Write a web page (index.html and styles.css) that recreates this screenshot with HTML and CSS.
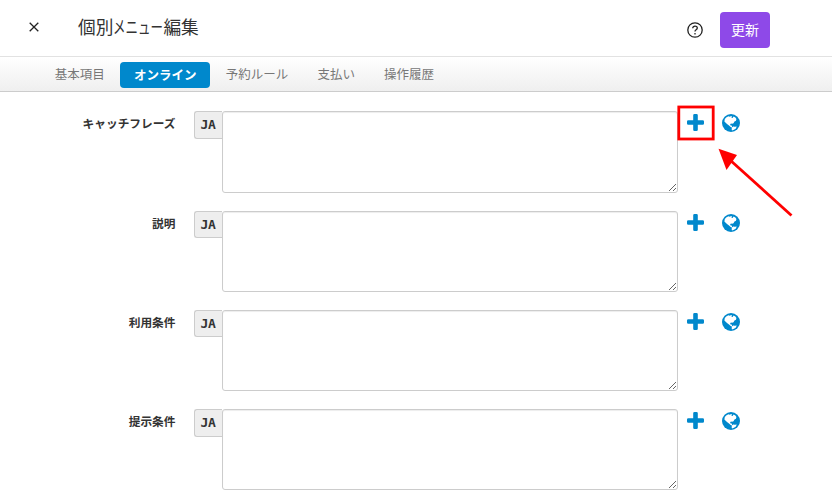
FILE: index.html
```html
<!DOCTYPE html>
<html lang="ja">
<head>
    <meta charset="UTF-8">
    <meta name="viewport" content="width=device-width, initial-scale=1.0">
    <title>個別メニュー編集</title>
    <link rel="stylesheet" href="styles.css">
</head>
<body>
    <svg class="symbols">
        <symbol id="plus" viewBox="0 0 17 17">
            <path d="M7.500 0h2q1.300 0 1.300 1.300v4.900h4.900q1.300 0 1.300 1.300v2q0 1.300-1.300 1.300h-4.900v4.900q0 1.300-1.300 1.300h-2q-1.300 0-1.300-1.300v-4.900H1.300Q0 10.800 0 9.500v-2q0-1.300 1.300-1.300h4.900V1.300Q6.200 0 7.500 0z"/>
        </symbol>
        <symbol id="globe" viewBox="0 0 18 18">
            <circle cx="9" cy="9" r="9"/>
            <path class="land" d="M2.800 5L4.500 3.300 6.500 2.200l1.200.5 1.600-.7.700.8-.7.900 1.300.3 1-1.500 1.800.9 1 1.600-.4 1.700-1.500.9-1 1.600-1.400.6-1.200-.3-.8.900.5 1.100 1.100.1.500 1.300 1 .7-.5.500-2-1-1.700-1.700-2-1.500L2.400 7.500z"/>
            <path class="land" d="M10 13.700l1.200-1.200 1.700.3 1.800-.2-.8 1.800-1.900 1.400-2 .6-.4-1.300z"/>
        </symbol>
    </svg>

    <header class="header">
        <button class="close">
            <svg width="10" height="10" viewBox="0 0 10 10"><path d="M.7.7l8.600 8.600M9.300.7L.7 9.300"/></svg>
        </button>
        <h1 class="title">個別<span class="narrow">メニュー</span>編集</h1>
        <button class="help">
            <svg width="16" height="16" viewBox="0 0 16 16">
                <circle cx="8" cy="8" r="7.200"/>
                <path d="M5.700 6.300C5.700 4.900 6.700 4.100 8 4.100s2.300.8 2.300 2c0 1.700-2.300 1.700-2.300 3.400"/>
                <path d="M8 10.900v1.500"/>
            </svg>
        </button>
        <button class="update">更新</button>
    </header>

    <nav class="tabs">
        <a class="tab">基本項目</a>
        <a class="tab active">オンライン</a>
        <a class="tab">予約ルール</a>
        <a class="tab">支払い</a>
        <a class="tab">操作履歴</a>
    </nav>

    <main class="form">
        <div class="row">
            <label class="label">キャッチフレーズ</label>
            <span class="lang">JA</span>
            <textarea class="input"></textarea>
            <svg class="plus"><use href="#plus"/></svg>
            <svg class="globe"><use href="#globe"/></svg>
        </div>
        <div class="row">
            <label class="label">説明</label>
            <span class="lang">JA</span>
            <textarea class="input"></textarea>
            <svg class="plus"><use href="#plus"/></svg>
            <svg class="globe"><use href="#globe"/></svg>
        </div>
        <div class="row">
            <label class="label">利用条件</label>
            <span class="lang">JA</span>
            <textarea class="input"></textarea>
            <svg class="plus"><use href="#plus"/></svg>
            <svg class="globe"><use href="#globe"/></svg>
        </div>
        <div class="row">
            <label class="label">提示条件</label>
            <span class="lang">JA</span>
            <textarea class="input"></textarea>
            <svg class="plus"><use href="#plus"/></svg>
            <svg class="globe"><use href="#globe"/></svg>
        </div>
    </main>

    <!-- callout around the first add button -->
    <svg class="callout" width="130" height="125" viewBox="0 0 130 125">
        <rect x="8.800" y="8" width="34.400" height="32"/>
        <path d="M60 61L121.500 116.500"/>
        <path class="head" d="M48.500 49.700L67 56 56.500 71z"/>
    </svg>
</body>
</html>
```

FILE: styles.css
```css
body {
    margin: 0;
    height: 504px;
    overflow: hidden;
    font-family: "Noto Sans CJK JP", sans-serif;
    background-color: #fff;
    color: #333;
}

button {
    padding: 0;
    border: none;
    background: none;
    font-family: inherit;
    cursor: pointer;
}

.symbols {
    position: absolute;
    width: 0;
    height: 0;
}

.header {
    display: flex;
    box-sizing: border-box;
    height: 56px;
    padding: 12px 62px 0 29px;
}

.close {
    width: 10px;
    height: 30px;
}

.close svg,
.help svg {
    display: block;
    fill: none;
    stroke: #222;
    stroke-width: 1.3;
}

.title {
    flex: 1;
    margin: 0 0 0 39px;
    font-size: 17.7px;
    font-weight: 400;
    line-height: 28px;
    white-space: nowrap;
}

.narrow {
    display: inline-block;
    width: 50px;
    transform: scaleX(.706);
    transform-origin: left;
}

.help {
    width: 16px;
    height: 36px;
    margin-right: 17px;
}

.update {
    width: 50px;
    height: 36px;
    padding-bottom: 3px;
    border-radius: 4px;
    background-color: #8e49e8;
    color: #fff;
    font-size: 14px;
}

.tabs {
    display: flex;
    align-items: center;
    box-sizing: border-box;
    height: 36px;
    padding: 2px 40px 0 41px;
    border-top: 1px solid #e2e2e2;
    border-bottom: 1px solid #ccc;
    background: linear-gradient(#fff, #efefef);
}

.tab {
    box-sizing: border-box;
    height: 26px;
    margin-right: 1.6px;
    padding: 0 13.8px;
    border-radius: 4px;
    color: #777;
    font-size: 12.5px;
    line-height: 24px;
}

.tab.active {
    background-color: #0088cc;
    color: #fff;
    font-weight: 700;
    line-height: 25px;
}

.form {
    padding-top: 19.4px;
}

.row {
    display: flex;
    align-items: flex-start;
    height: 81.2px;
    margin-bottom: 18.1px;
}

.label {
    width: 175.5px;
    margin-right: 18.5px;
    font-size: 11.7px;
    font-weight: 700;
    line-height: 23px;
    text-align: right;
}

.lang {
    box-sizing: border-box;
    width: 28px;
    height: 27.4px;
    padding-right: 1px;
    border: 1px solid #ccc;
    border-right: none;
    border-radius: 3px 0 0 3px;
    background-color: #eee;
    font-family: "DejaVu Sans Mono", monospace;
    font-size: 13px;
    font-weight: 700;
    letter-spacing: -.3px;
    line-height: 26px;
    text-align: center;
}

.input {
    box-sizing: border-box;
    width: 456px;
    height: 100%;
    margin: 0;
    border: 1px solid #ccc;
    border-radius: 3px;
    box-shadow: inset 0 1px 1px rgba(0, 0, 0, .075);
    outline: none;
}

.plus {
    width: 17px;
    height: 17px;
    margin: 3px 0 0 9px;
    fill: #0088cc;
}

.globe {
    width: 18px;
    height: 18px;
    margin: 3px 0 0 18px;
    fill: #0088cc;
}

.land {
    fill: #fff;
}

.callout {
    position: absolute;
    top: 99px;
    left: 670px;
    fill: none;
    stroke: #f00;
    stroke-width: 2.8;
    pointer-events: none;
}

.head {
    fill: #f00;
    stroke: none;
}
```
